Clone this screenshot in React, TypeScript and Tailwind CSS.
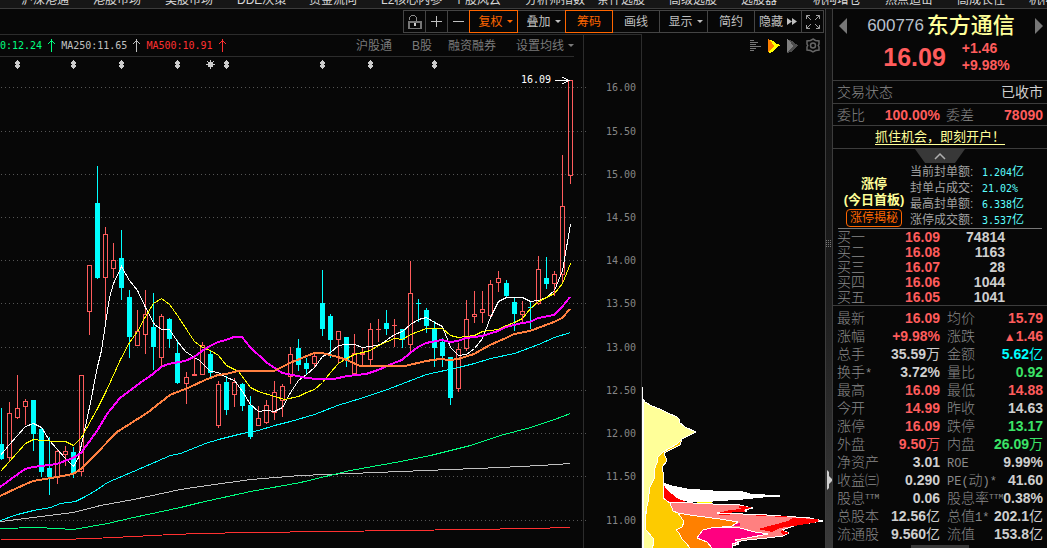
import clsx from 'clsx';

type Tone = 'red' | 'green' | 'cyan' | 'plain';
type Point = [number, number];

interface Quote {
  label: string;
  sup?: string;
  value: string;
  unit?: string;
  tone: Tone;
}

const toneClass: Record<Tone, string> = {
  red: 'text-[#ff5c5c]',
  green: 'text-[#3be467]',
  cyan: 'text-[#00ffff]',
  plain: 'text-[#cfcfcf]'
};

const menuItems = [
  { name: '沪深港通', arrow: true },
  { name: '港股市场', arrow: true },
  { name: '美股市场', arrow: true },
  { name: 'DDE决策' },
  { name: '资金流向', arrow: true },
  { name: 'L2核心内参' },
  { name: '个股风云', arrow: true },
  { name: '分析师指数' },
  { name: '条件选股' },
  { name: '高级选股' },
  { name: '选股器' },
  { name: '机构增仓' },
  { name: '热点追击' },
  { name: '高成长性' },
  { name: '机构' }
];

const quotes: [Quote, Quote][] = [
  [{ label: '最新', value: '16.09', tone: 'red' }, { label: '均价', value: '15.79', tone: 'red' }],
  [{ label: '涨幅', value: '+9.98%', tone: 'red' }, { label: '涨跌', value: '▲1.46', tone: 'red' }],
  [{ label: '总手', value: '35.59', unit: '万', tone: 'plain' }, { label: '金额', value: '5.62', unit: '亿', tone: 'cyan' }],
  [{ label: '换手*', value: '3.72%', tone: 'plain' }, { label: '量比', value: '0.92', tone: 'green' }],
  [{ label: '最高', value: '16.09', tone: 'red' }, { label: '最低', value: '14.88', tone: 'red' }],
  [{ label: '今开', value: '14.99', tone: 'red' }, { label: '昨收', value: '14.63', tone: 'plain' }],
  [{ label: '涨停', value: '16.09', tone: 'red' }, { label: '跌停', value: '13.17', tone: 'green' }],
  [{ label: '外盘', value: '9.50', unit: '万', tone: 'red' }, { label: '内盘', value: '26.09', unit: '万', tone: 'green' }],
  [{ label: '净资产', value: '3.01', tone: 'plain' }, { label: 'ROE', value: '9.99%', tone: 'plain' }],
  [{ label: '收益㈢', value: '0.290', tone: 'plain' }, { label: 'PE(动)*', value: '41.60', tone: 'plain' }],
  [{ label: '股息', sup: 'TTM', value: '0.06', tone: 'plain' }, { label: '股息率', sup: 'TTM', value: '0.38%', tone: 'plain' }],
  [{ label: '总股本', value: '12.56', unit: '亿', tone: 'plain' }, { label: '总值1*', value: '202.1', unit: '亿', tone: 'plain' }],
  [{ label: '流通股', value: '9.560', unit: '亿', tone: 'plain' }, { label: '流值', value: '153.8', unit: '亿', tone: 'plain' }]
];

const bids = [
  ['买一', '16.09', '74814'],
  ['买二', '16.08', '1163'],
  ['买三', '16.07', '28'],
  ['买四', '16.06', '1044'],
  ['买五', '16.05', '1041']
];

const limitInfo = [
  ['当前封单额:', '1.204', '亿'],
  ['封单占成交:', '21.02%', ''],
  ['最高封单额:', '6.338', '亿'],
  ['涨停成交额:', '3.537', '亿']
];

const priceTicks: [string, number][] = [
  ['16.00', 87], ['15.50', 131], ['15.00', 174], ['14.50', 217], ['14.00', 260], ['13.50', 303],
  ['13.00', 347], ['12.50', 390], ['12.00', 433], ['11.50', 476], ['11.00', 520]
];

// [direction, high, body top, body bottom, low], one entry for each day
const candles: [1 | 0, number, number, number, number][] = [
  [0, 408, 444, 459, 459], [1, 402, 413, 458, 461], [1, 375, 408, 418, 419], [1, 399, 401, 407, 425],
  [0, 400, 400, 434, 450], [0, 428, 429, 472, 476], [0, 437, 468, 477, 494], [1, 450, 451, 477, 484],
  [1, 446, 451, 455, 466], [0, 447, 452, 474, 477], [1, 375, 375, 472, 476], [1, 265, 265, 312, 335],
  [0, 166, 203, 278, 278], [1, 227, 234, 278, 321], [1, 243, 260, 269, 278], [0, 230, 258, 288, 299],
  [0, 290, 297, 337, 357], [1, 310, 331, 346, 346], [1, 290, 314, 335, 354], [0, 293, 327, 347, 369],
  [1, 314, 316, 358, 366], [0, 318, 319, 339, 347], [0, 340, 353, 383, 383], [1, 372, 377, 384, 404],
  [1, 357, 374, 376, 376], [1, 342, 345, 375, 375], [0, 351, 354, 373, 377], [1, 381, 384, 426, 428],
  [0, 376, 382, 410, 414], [1, 378, 382, 395, 407], [0, 383, 384, 406, 410], [0, 396, 405, 437, 438],
  [1, 406, 418, 426, 426], [1, 400, 405, 423, 424], [1, 381, 392, 413, 420], [1, 384, 386, 401, 417],
  [1, 347, 354, 377, 384], [0, 339, 348, 365, 370], [0, 358, 363, 369, 374], [1, 353, 356, 364, 368],
  [0, 270, 303, 329, 335], [0, 314, 316, 340, 357], [1, 331, 331, 340, 363], [0, 337, 337, 360, 366],
  [1, 334, 353, 374, 374], [1, 347, 353, 355, 365], [1, 323, 329, 360, 365], [1, 319, 329, 330, 342],
  [0, 310, 323, 329, 334], [1, 319, 325, 326, 347], [0, 329, 329, 340, 347], [1, 261, 293, 345, 352],
  [0, 299, 303, 304, 321], [0, 308, 310, 326, 332], [0, 321, 329, 348, 366], [0, 338, 342, 356, 366],
  [0, 357, 357, 398, 404], [1, 343, 349, 389, 392], [1, 300, 319, 349, 351], [1, 291, 314, 317, 323],
  [1, 291, 309, 313, 323], [1, 280, 284, 316, 316], [1, 271, 278, 283, 292], [0, 280, 283, 296, 296],
  [0, 297, 302, 314, 330], [1, 301, 311, 315, 322], [0, 301, 307, 308, 328], [1, 256, 269, 304, 305],
  [0, 257, 278, 284, 288], [1, 271, 274, 284, 296], [1, 155, 206, 275, 284], [1, 80, 80, 176, 184]
];

const averages: { name: string; color: string; width: number; points: Point[] }[] = [
  {
    name: 'MA500', color: '#ff3030', width: 1,
    points: [[0, 539], [60, 539], [92, 538], [133, 536], [172, 534], [200, 533], [250, 532], [330, 531], [400, 530], [470, 529], [530, 528], [570, 527]]
  },
  {
    name: 'MA250', color: '#c0c0c0', width: 1,
    points: [[0, 521], [25, 518], [73, 512], [100, 505], [133, 499], [180, 489], [200, 486], [250, 479], [300, 475], [375, 472], [450, 469], [500, 467], [540, 465], [570, 463]]
  },
  {
    name: 'MA120', color: '#00ff80', width: 1,
    points: [[0, 528], [37, 527], [73, 529], [107, 523], [133, 517], [180, 507], [200, 502], [250, 491], [300, 482], [350, 470], [400, 461], [430, 455], [470, 445], [500, 435], [530, 427], [554, 419], [570, 413]]
  },
  {
    name: 'MA60', color: '#00ffff', width: 1,
    points: [[0, 520], [17, 514], [33, 510], [50, 507], [60, 503], [75, 501], [85, 496], [97, 489], [107, 482], [133, 471], [170, 455], [180, 453], [205, 443], [218, 439], [242, 433], [258, 430], [274, 425], [290, 421], [314, 414], [337, 405], [360, 398], [387, 389], [426, 374], [458, 367], [474, 363], [490, 358], [514, 353], [538, 344], [554, 337], [570, 332]]
  },
  {
    name: 'MA5', color: '#ffffff', width: 1,
    points: [[0, 455], [9, 444], [25, 426], [33, 423], [41, 427], [49, 440], [65, 458], [73, 466], [78, 457], [83, 435], [90, 402], [97, 366], [101, 350], [105, 323], [109, 297], [113, 283], [121, 266], [129, 280], [137, 290], [145, 307], [154, 324], [161, 329], [169, 329], [177, 341], [185, 351], [194, 357], [199, 360], [210, 371], [218, 372], [226, 377], [234, 380], [242, 391], [250, 404], [258, 411], [266, 410], [274, 411], [282, 407], [290, 392], [298, 380], [306, 374], [314, 367], [322, 356], [330, 352], [338, 345], [346, 344], [354, 344], [362, 347], [370, 346], [380, 344], [394, 334], [402, 331], [410, 324], [418, 319], [426, 317], [434, 322], [442, 326], [450, 347], [458, 355], [466, 354], [474, 348], [482, 338], [490, 317], [498, 301], [506, 297], [522, 297], [530, 301], [538, 300], [546, 297], [554, 290], [562, 270], [570, 224]]
  },
  {
    name: 'MA10', color: '#ffff00', width: 1,
    points: [[0, 471], [25, 443], [33, 439], [41, 440], [57, 441], [65, 441], [73, 445], [81, 437], [97, 408], [106, 390], [120, 359], [129, 342], [137, 331], [145, 316], [153, 303], [161, 298], [169, 304], [177, 315], [190, 335], [194, 341], [202, 347], [210, 350], [218, 355], [226, 365], [238, 371], [250, 387], [258, 391], [274, 396], [284, 399], [298, 396], [306, 392], [314, 389], [322, 382], [330, 372], [338, 363], [346, 358], [354, 354], [370, 350], [380, 344], [394, 338], [402, 339], [410, 334], [426, 328], [442, 328], [450, 335], [458, 337], [474, 335], [482, 331], [498, 329], [506, 325], [514, 322], [522, 318], [530, 308], [538, 301], [546, 297], [554, 293], [562, 283], [570, 263]]
  },
  {
    name: 'MA20', color: '#ff00ff', width: 2,
    points: [[0, 487], [25, 469], [33, 467], [57, 464], [73, 458], [81, 453], [89, 442], [97, 431], [107, 414], [120, 398], [140, 383], [153, 374], [161, 367], [168, 364], [185, 361], [194, 357], [202, 351], [210, 346], [218, 342], [226, 340], [234, 337], [242, 337], [250, 347], [266, 362], [282, 373], [298, 376], [306, 378], [318, 379], [334, 379], [347, 376], [366, 374], [378, 370], [394, 363], [402, 360], [410, 353], [418, 347], [426, 343], [442, 340], [450, 342], [458, 341], [466, 338], [482, 336], [498, 331], [506, 327], [522, 323], [530, 322], [538, 318], [554, 315], [562, 307], [570, 297]]
  },
  {
    name: 'MA30', color: '#ff8040', width: 2,
    points: [[0, 496], [17, 488], [33, 481], [57, 477], [73, 474], [81, 469], [93, 457], [117, 432], [147, 413], [170, 395], [190, 387], [205, 380], [218, 375], [226, 374], [238, 371], [274, 371], [290, 363], [314, 353], [322, 353], [338, 357], [347, 360], [360, 366], [405, 366], [426, 361], [440, 359], [450, 360], [458, 359], [474, 354], [490, 345], [506, 338], [514, 334], [530, 331], [546, 325], [554, 322], [562, 318], [570, 309]]
  }
];

const eventMarks = [17, 73, 121, 177, 226, 322, 370, 434];

// Thin lines run through pixel centres so that no segment drops out
const joinPoints = (points: Point[], width: number) => {
  const shift = width % 2 ? 0.5 : 0;
  return points.map(([x, y]) => `${x + shift},${y + shift}`).join(' ');
};

// There is one extra pixel of spacing after the 23rd candle
const candleX = (index: number) => index * 8 + (index < 23 ? 1 : 2);

const TopMenu = () => (
  <nav className="h-[9px] shrink-0 overflow-hidden border-b border-[#3c3c3c] bg-[#161616] flex items-end pl-[21px]">
    {menuItems.map(item => (
      <a key={item.name} href="#" className="w-[72px] shrink-0 h-4 leading-4 text-xs text-[#d8d8d8] whitespace-nowrap flex items-center gap-1.5">
        {item.name}
        {item.arrow && <span className="mb-1 border-x-[3px] border-t-[3px] border-x-transparent border-t-[#bbbbbb]" />}
      </a>
    ))}
  </nav>
);

const toolButton = 'relative -ml-px h-[23px] border border-[#444444] text-xs text-[#c0c0c0] flex items-center justify-center whitespace-nowrap';

const Caret = () => <span className="ml-1 border-x-[3px] border-t-[3px] border-x-transparent border-t-current" />;

const Toolbar = () => (
  <div className="h-[25px] shrink-0 flex justify-end items-center pr-px">
    <button aria-label="锁定" className={clsx(toolButton, 'w-[23px]')}>
      <svg width="15" height="14" viewBox="0 0 15 14" fill="none" stroke="#8a8a8a" shapeRendering="crispEdges">
        <path d="M2.500 5V2.500l2-2h3l2 2V6" />
        <path d="M1.500 6.500h12v7h-12z" strokeWidth="2" stroke="#777777" />
        <path d="M7.500 8v3" stroke="#cccccc" strokeWidth="2" />
      </svg>
    </button>
    <button aria-label="放大" className={clsx(toolButton, 'w-[23px]')}>
      <svg width="11" height="11" viewBox="0 0 11 11" stroke="#c0c0c0" shapeRendering="crispEdges">
        <path d="M0 5.500h11M5.500 0v11" />
      </svg>
    </button>
    <button aria-label="缩小" className={clsx(toolButton, 'w-[23px]')}>
      <svg width="11" height="11" viewBox="0 0 11 11" stroke="#c0c0c0" shapeRendering="crispEdges">
        <path d="M0 5.500h11" />
      </svg>
    </button>
    <button className={clsx(toolButton, 'w-[49px] pl-1 z-10 border-[#ff6600] text-[#ff6600]')}>复权<Caret /></button>
    <button className={clsx(toolButton, 'w-[49px] pl-1')}>叠加<Caret /></button>
    <button className={clsx(toolButton, 'w-[48px] z-10 border-[#ff6600] text-[#ff6600]')}>筹码</button>
    <button className={clsx(toolButton, 'w-[48px]')}>画线</button>
    <button className={clsx(toolButton, 'w-[49px] pl-1')}>显示<Caret /></button>
    <button className={clsx(toolButton, 'w-[48px]')}>简约</button>
    <button className={clsx(toolButton, 'w-[48px]')}>
      隐藏
      <svg className="ml-1" width="10" height="7" viewBox="0 0 10 7" fill="#c0c0c0">
        <path d="M0 0l5 3.500L0 7zM5 0l5 3.500L5 7z" />
      </svg>
    </button>
    <button aria-label="全屏" className={clsx(toolButton, 'w-[23px]')}>
      <svg width="14" height="14" viewBox="0 0 14 14" fill="none" stroke="#a0a0a0">
        <path d="M.5 4V.5H4M10 .5h3.500V4M13.500 10v3.500H10M4 13.500H.5V10M.5.5l4.500 4.500M13.500.5L9 5M13.500 13.500L9 9M.5 13.500L5 9" />
      </svg>
    </button>
  </div>
);

const UpArrow = () => (
  <svg className="mx-1.5 shrink-0" width="7" height="13" viewBox="0 0 7 13" fill="none" stroke="currentColor" shapeRendering="crispEdges">
    <path d="M3.500 0v13M0 4.500h1M1 3.500h1M2 2.500h3M5 3.500h1M6 4.500h1" />
  </svg>
);

const AverageBar = () => (
  <div className="h-[22px] shrink-0 mr-[9px] border-b border-[#2c2c2c] flex items-center whitespace-nowrap overflow-hidden">
    <div className="flex items-center text-[10px] font-['DejaVu_Sans_Mono','Noto_Sans_CJK_SC',monospace]">
      <span className="text-[#00ff80] flex items-center">0:12.24<UpArrow /></span>
      <span className="text-[#c0c0c0] flex items-center">MA250:11.65<UpArrow /></span>
      <span className="text-[#ff3030] flex items-center">MA500:10.91<UpArrow /></span>
    </div>
    <div className="ml-auto flex items-center text-xs text-[#7a7a7a]">
      <a href="#">沪股通</a>
      <a href="#" className="ml-5">B股</a>
      <a href="#" className="ml-4">融资融券</a>
      <button className="ml-5 flex items-center">设置均线<Caret /></button>
    </div>
  </div>
);

const CandleChart = () => (
  <svg className="flex-1 min-h-0 w-full overflow-visible" viewBox="0 57 583 491" preserveAspectRatio="xMaxYMin meet" shapeRendering="crispEdges">
    {priceTicks.map(([label, y]) => (
      <line key={label} x1="1" x2="586" y1={y + 0.5} y2={y + 0.5} stroke="#555555" strokeDasharray="1 3" />
    ))}

    {eventMarks.map(x => (
      <path key={x} d={`M${x} 60h1v1h1v1h1v2h-1v1h1v2h-1v1h-1v1h-1v-1h-1v-1h-1v-2h1v-1h-1v-2h1v-1h1z`} fill="#cccccc" />
    ))}
    <path d="M210.500 60v9M206 64.500h9M207.500 61.500l6 6M213.500 61.500l-6 6" stroke="#cccccc" />
    <circle cx="210.500" cy="64.500" r="2.500" fill="#cccccc" />

    {/* Candles */}
    {candles.map(([up, high, top, bottom, low], index) => {
      const x = candleX(index);
      if (!up) {
        return (
          <g key={x} fill="#00ffff">
            <rect x={x} y={high} width="1" height={low - high + 1} />
            <rect x={x - 2} y={top} width="5" height={bottom - top} />
          </g>
        );
      }
      return (
        <g key={x} fill="#ff5c5c">
          <rect x={x} y={high} width="1" height={top - high} />
          <rect x={x} y={bottom} width="1" height={low - bottom} />
          {bottom - top < 3
            ? <rect x={x - 2} y={top} width="5" height={bottom - top} />
            : <rect x={x - 1.5} y={top + 0.5} width="4" height={bottom - top - 1} fill="none" stroke="#ff5c5c" />}
        </g>
      );
    })}

    {/* Moving averages */}
    {averages.map(line => (
      <polyline key={line.name} points={joinPoints(line.points, line.width)} fill="none" stroke={line.color} strokeWidth={line.width} />
    ))}

    <text x="521" y="83" fill="#ffffff" className="text-[10px] font-['DejaVu_Sans_Mono',monospace]">16.09</text>
    <path d="M555 80.500h14M562.500 77l6.500 3.500-6.500 3.500" fill="none" stroke="#ffffff" />
  </svg>
);

const PriceAxis = () => (
  <div className="w-[58px] shrink-0 border-l border-t border-[#2c2c2c] flex flex-col pt-[22px]">
    <svg className="flex-1 min-h-0 w-full" viewBox="584 57 57 491" preserveAspectRatio="xMinYMin meet">
      {priceTicks.map(([label, y]) => (
        <text key={label} x="606" y={y + 4} fill="#868686" className="text-[10px] font-['DejaVu_Sans_Mono',monospace]">{label}</text>
      ))}
    </svg>
  </div>
);

const ChipChart = () => (
  <div className="w-[184px] shrink-0 border-l border-[#2c2c2c] flex flex-col">
    <div className="h-[23px] shrink-0 flex items-center justify-end gap-1.5 pr-[5px]">
      <button aria-label="筹码分布">
        <svg width="12" height="12" viewBox="0 0 12 12" stroke="#777777" shapeRendering="crispEdges">
          <path d="M0 .5h4M0 2.500h8M0 4.500h6M0 6.500h11M0 8.500h6M0 10.500h4" />
        </svg>
      </button>
      <button aria-label="远期成本">
        <svg width="13" height="14" viewBox="0 0 13 14" shapeRendering="crispEdges">
          <path d="M0 0l5 2 3 3 5 1-5 3-4 4-3 1z" fill="#ffff00" />
          <path d="M0 0l4 4 2 3-3 3-3 4z" fill="#ff8000" />
        </svg>
      </button>
      <button aria-label="近期成本">
        <svg width="13" height="14" viewBox="0 0 13 14" shapeRendering="crispEdges">
          <path d="M0 0l5 2 3 3 4 1-4 3-4 4-4 1z" fill="#4c4c4c" />
          <path d="M0 0l4 4 2 3-3 3-3 4z" fill="#808080" />
        </svg>
      </button>
      <button aria-label="设置">
        <svg width="14" height="15" viewBox="0 0 14 15" fill="none" stroke="#666666" strokeWidth="1.500">
          <path d="M7 1l2.500 1.500 3.500.5v3l-.8 1.500.8 1.500v3l-3.500.5L7 14l-2.500-1.500L1 12V9l.8-1.500L1 6V3l3.500-.5z" />
          <circle cx="7" cy="7.500" r="2.500" />
        </svg>
      </button>
    </div>
    <svg className="flex-1 min-h-0 w-full" viewBox="642 57 183 491" preserveAspectRatio="xMinYMin meet" shapeRendering="crispEdges" stroke="#ffffff" strokeWidth="1">
      <path d="M663 483l9 3 15 3 26 2 30 1 7 2 30 2-17 1-20 2-30 2h-26l-23-3z" fill="#ffffff" />
      <path d="M663 484l4 6 10 8 9 4-18 1-5-5z" fill="#ff0000" stroke="none" />
      <path d="M667 502l26 1 20 1 27 1 8 2 5 1-8 2 2 1-30 2 26 1 24 1 43 3 13 3-26 4-15 5 7 3-6 3-16 2-20 2-12 2 4 2-7 2 1 4h-50l-20-35z" fill="#ff8080" />
      <path d="M740 506l12 1-9 3 2 2-27 1 12-3 12-1-4-2z" fill="#ff0000" stroke="none" />
      <path d="M793 518l25 1v3l-18 3-20 3-8 4-14-3 19-5 11-3z" fill="#ff0000" stroke="none" />
      <path d="M782 530l7 3-5 2-4-3z" fill="#ff0000" stroke="none" />
      <path d="M719 514.500l11 0M756 515.500l10 0M775 516.500l12 0" stroke="#ff0000" />
      <path d="M697 502.500h15" stroke="#ffff00" />
      <path d="M677 513l20 3 23 3 18 3-6 4-19 2-10 2-6 8 10 4 5 6h-26l-12-8-2-11z" fill="#ff8000" />
      <path d="M703 530l12-3 25 1 15 4 13 2-21 4-12 2 4 2-7 2 1 4h-21l-5-6-10-4z" fill="#ff0080" />
      <path d="M735 524l5-1v3l-6 0z" fill="#ff0080" stroke="none" />
      <path d="M682 439l-2 6-10 5-6 3 3 8-5 6 2 9-1 9v13l7 5 3 8 5 2 3 4 3 5-2 5-6 3 3 3 3 6 4 4 4 5h-47l8-90 20-16z" fill="#fdcb00" />
      <path d="M643 399l2 3 7 4 8 3 8 4 9 4 3 3-1 2 6 5 11 5-6 3-8 4-5 5-14 8-5 5-1 6-3 7 1 7-5 10-2 15-3 13 1 15 7 8 1 5-2 5h-9z" fill="#ffff99" />
      <rect x="642" y="387" width="1" height="161" fill="#ffffff" stroke="none" />
    </svg>
  </div>
);

const Splitter = () => (
  <div className="w-[8px] shrink-0 border-x border-[#3c3c3c] bg-gradient-to-b from-[#101010] via-[#1c1c1c] to-[#3a3a3a] relative">
    <svg className="absolute left-0 top-[230px]" width="6" height="10" viewBox="0 0 6 10" stroke="#777777" strokeDasharray="1 1" shapeRendering="crispEdges">
      <path d="M0 1.500h6M0 3.500h6M0 5.500h6M0 7.500h6" />
    </svg>
    <svg className="absolute left-px top-[461px]" width="5" height="20" viewBox="0 0 5 20" fill="#cfcfcf">
      <path d="M0 0l2 2v4l3 3v2l-3 3v4l-2 2z" />
    </svg>
  </div>
);

// Latin letters and digits inside a label are set smaller than the ideographs
const Label = ({ text, sup }: { text: string; sup?: string }) => (
  <>
    {text.split(/([A-Za-z0-9()*]+)/).map((part, index) =>
      index % 2 ? <span key={index} className="text-xs leading-none font-['Liberation_Mono',monospace]">{part}</span> : part
    )}
    {sup && <span className="relative -top-1 text-[8px] leading-none font-['Liberation_Mono',monospace]">{sup}</span>}
  </>
);

const QuoteCells = ({ quote, second }: { quote: Quote; second?: boolean }) => (
  <>
    <th scope="row" className={clsx('p-0 text-left font-light text-[#8a8a8a] whitespace-nowrap', second && 'pl-[7px]')}>
      <Label text={quote.label} sup={quote.sup} />
    </th>
    <td className={clsx('p-0 text-right font-bold whitespace-nowrap', toneClass[quote.tone])}>
      {quote.value.startsWith('▲') ? <><span className="text-xs leading-none">▲</span>{quote.value.slice(1)}</> : quote.value}
      {quote.unit && <span className="font-normal">{quote.unit}</span>}
    </td>
  </>
);

const StockPanel = () => (
  <aside className="w-[214px] shrink-0 flex flex-col text-sm">
    {/* Name and last price */}
    <header className="h-[72px] shrink-0 border-b border-[#3c3c3c]">
      <div className="h-[34px] flex items-center justify-between pl-1.5 pr-1">
        <button aria-label="上一只" className="border-y-8 border-r-8 border-y-transparent border-r-[#777777]" />
        <h1 className="flex items-center gap-[3px] whitespace-nowrap">
          <span className="text-[17px] text-[#b8c0cc]">600776</span>
          <span className="text-[22px] leading-8 font-medium text-[#ffff99]">东方通信</span>
        </h1>
        <button aria-label="下一只" className="border-y-8 border-l-8 border-y-transparent border-l-[#777777]" />
      </div>
      <div className="-mt-[3px] flex items-center justify-center gap-4 pl-[17px] pr-1 text-[#ff5c5c] font-bold">
        <span className="text-[25px] leading-7">16.09</span>
        <div className="leading-[17px]">
          <div>+1.46</div>
          <div>+9.98%</div>
        </div>
      </div>
    </header>

    <div className="h-[23px] shrink-0 border-b border-[#3c3c3c] flex items-center justify-between px-1">
      <span className="font-light text-[#8a8a8a]">交易状态</span>
      <span className="text-[#cfcfcf]">已收市</span>
    </div>
    <div className="h-[22px] shrink-0 border-b border-[#3c3c3c] flex items-center px-1">
      <span className="font-light text-[#8a8a8a]">委比</span>
      <span className="ml-auto font-bold text-[#ff5c5c]">100.00%</span>
      <span className="ml-1.5 font-light text-[#8a8a8a]">委差</span>
      <span className="w-[69px] text-right font-bold text-[#ff5c5c]">78090</span>
    </div>
    <div className="h-[23px] shrink-0 border-b border-[#3c3c3c] flex items-center justify-center">
      <a href="#" className="text-[13px] leading-[14px] text-[#ffff99] border-b border-[#ffff99]">抓住机会，即刻开户！</a>
    </div>

    {/* Limit-up summary */}
    <div className="h-[80px] shrink-0 mx-[5px] border-b border-[#777777] flex flex-col">
      <button aria-label="收起" className="h-[14px] shrink-0 self-center">
        <svg width="50" height="14" viewBox="0 0 50 14">
          <path d="M0 0h50L40 14H10z" fill="#383838" />
          <path d="M20 10l5-5 5 5" fill="none" stroke="#b0b0b0" strokeWidth="1.500" />
        </svg>
      </button>
      <div className="flex">
        <div className="w-[72px] flex flex-col items-center pt-[13px] text-[13px] leading-4 font-bold text-[#ffff99] whitespace-nowrap">
          <div>涨停</div>
          <div>(今日首板)</div>
          <button className="mt-px h-[18px] w-[56px] rounded-sm border border-[#ff6600] text-xs leading-4 font-normal text-[#ff6600]">涨停揭秘</button>
        </div>
        <dl className="pt-px text-xs leading-4 whitespace-nowrap">
          {limitInfo.map(([label, value, unit]) => (
            <div key={label} className="flex h-4">
              <dt className="w-[72px] text-[#a0a0a0]">{label}</dt>
              <dd className="text-[#5cffff]">
                <span className="text-[10px] leading-none font-['DejaVu_Sans_Mono',monospace]">{value}</span>{unit}
              </dd>
            </div>
          ))}
        </dl>
      </div>
    </div>

    {/* Bids */}
    <div className="shrink-0 border-b border-[#3c3c3c] pt-px">
      <table className="w-full table-fixed border-collapse">
        <tbody>
          {bids.map(([label, price, volume]) => (
            <tr key={label} className="h-[15px] leading-[15px]">
              <th scope="row" className="p-0 pl-1 w-[37px] text-left font-light text-[#8a8a8a]">{label}</th>
              <td className="p-0 w-[70px] text-right font-bold text-[#ff5c5c]">{price}</td>
              <td className="p-0 pr-[42px] text-right font-bold text-[#cfcfcf]">{volume}</td>
            </tr>
          ))}
        </tbody>
      </table>
    </div>

    {/* Quote details */}
    <div className="pt-[3px] px-1">
      <table className="w-full table-fixed border-collapse">
        <colgroup>
          <col className="w-[44px]" />
          <col className="w-[59px]" />
          <col className="w-[48px]" />
          <col />
        </colgroup>
        <tbody>
          {quotes.map(([left, right]) => (
            <tr key={left.label} className="h-[18px] leading-4">
              <QuoteCells quote={left} />
              <QuoteCells quote={right} second />
            </tr>
          ))}
        </tbody>
      </table>
    </div>
    <div className="mt-0.5 mx-auto h-1 w-[58px] shrink-0 bg-[#383838]" />
  </aside>
);

const App = () => (
  <div className="h-screen min-h-[548px] overflow-hidden flex flex-col bg-[#070707] font-['Liberation_Sans','Noto_Sans_CJK_SC',sans-serif]">
    <TopMenu />
    <div className="flex-1 min-h-0 flex">
      <main className="flex-1 min-w-0 flex flex-col">
        <Toolbar />
        <div className="flex-1 min-h-0 flex">
          <section className="flex-1 min-w-0 flex flex-col border-t border-[#2c2c2c]">
            <AverageBar />
            <CandleChart />
          </section>
          <PriceAxis />
          <ChipChart />
        </div>
      </main>
      <Splitter />
      <StockPanel />
    </div>
  </div>
);

export default App;
